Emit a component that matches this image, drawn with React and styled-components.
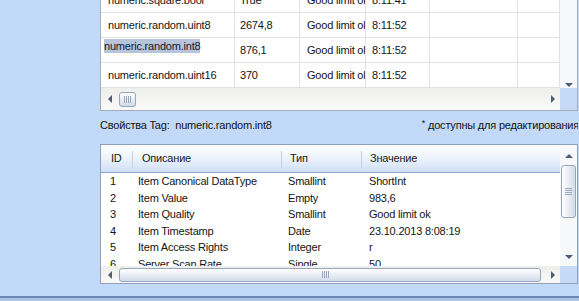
import React from 'react';
import styled, { createGlobalStyle } from 'styled-components';

const Global = createGlobalStyle`
  html, body { margin: 0; padding: 0; }
  body {
    width: 579px; height: 301px; overflow: hidden;
    background: #c2d9f8;
    font-family: "Liberation Sans", Arial, sans-serif;
    font-size: 11px; letter-spacing: -0.2px; color: #141414;
  }
`;

const Screen = styled.div`
  width: 579px; height: 301px;
  display: flex; flex-direction: column;
  background: #c2d9f8;
`;
const Workspace = styled.div`
  height: 296px; flex: none; display: flex;
`;
const Side = styled.div`
  width: 100px; flex: none;
`;
const Content = styled.div`
  width: 478px; flex: none; display: flex; flex-direction: column;
`;
const StatusEdge = styled.div`
  height: 2px; flex: none; background: #6a86b3;
`;
const StatusFill = styled.div`
  flex: 1; background: #aec4e4;
`;

/* ---------- grid panels ---------- */
const Panel = styled.div`
  box-sizing: border-box;
  height: ${p => p.$h}px;
  border: 1px solid ${p => p.$border};
  border-top: ${p => (p.$openTop ? 'none' : `1px solid ${p.$border}`)};
  background: #fff;
  display: grid;
  grid-template-columns: 459px 17px;
  grid-template-rows: ${p => p.$rows};
  overflow: hidden;
`;

const Body = styled.div`
  overflow: hidden;
  grid-column: 1;
`;

/* top grid */
const TopRows = styled.div`
  margin-top: -12px;
`;
const TopRow = styled.div`
  display: grid;
  grid-template-columns: 134px 65px 66px 64px 88px 42px;
  height: 25px;
`;
const TopCell = styled.div`
  box-sizing: border-box;
  border-right: 1px solid #e2e2e2;
  border-bottom: 1px solid #e2e2e2;
  padding-left: ${p => p.$pad}px;
  padding-top: ${p => (p.$editing ? 1 : 0)}px;
  padding-bottom: ${p => (p.$editing ? 0 : 1)}px;
  display: flex;
  align-items: ${p => (p.$editing ? 'flex-start' : 'center')};
  white-space: nowrap;
  overflow: hidden;
`;
const Selected = styled.span`
  background: #b6c4dc;
  line-height: 14px;
  color: #10182a;
`;

/* property grid */
const HeaderRow = styled.div`
  box-sizing: border-box;
  height: 28px;
  display: grid;
  grid-template-columns: 32px 149px 80px 198px;
  background: linear-gradient(#fdfeff 0%, #eef4fc 45%, #cfe0f6 100%);
  border-bottom: 1px solid #8fa8cf;
`;
const HeaderCell = styled.div`
  display: flex;
  align-items: center;
  justify-content: space-between;
  padding-left: ${p => p.$pad}px;
  padding-bottom: 1px;
  white-space: nowrap;
  color: #1a1a1a;
`;
const Divider = styled.div`
  width: 1px;
  height: 17px;
  background: #c7d1df;
  margin-top: 2px;
`;
const PropRow = styled.div`
  display: grid;
  grid-template-columns: 32px 149px 80px 198px;
  height: 16.5px;
  align-items: center;
`;
const PropCell = styled.div`
  padding-left: ${p => p.$pad}px;
  white-space: nowrap;
  overflow: hidden;
  line-height: 14px;
`;

/* ---------- scrollbars ---------- */
const VScroll = styled.div`
  grid-column: 2;
  grid-row: ${p => p.$span};
  background: #f7f8f9;
  display: flex;
  flex-direction: column;
  align-items: center;
  justify-content: ${p => (p.$only ? 'flex-end' : 'flex-start')};
  padding-top: ${p => p.$top || 0}px;
  padding-bottom: ${p => p.$bottom || 0}px;
  box-sizing: border-box;
`;
const HScroll = styled.div`
  grid-column: 1;
  display: flex;
  align-items: center;
  padding: 0 5px 0 7px;
  background: linear-gradient(#eeeeec, #f9f9f8);
`;
const Corner = styled.div`
  grid-column: 2;
  background: #c4daf7;
`;
const Spacer = styled.div`
  flex: 1;
`;
const Arrow = styled.div`
  width: 0; height: 0; flex: none;
  border-style: solid;
  ${p =>
    p.$dir === 'left'
      ? 'border-width: 4px 4px 4px 0; border-color: transparent #4e5b74 transparent transparent;'
      : p.$dir === 'right'
      ? 'border-width: 4px 0 4px 4px; border-color: transparent transparent transparent #4e5b74;'
      : p.$dir === 'up'
      ? 'border-width: 0 4px 4px 4px; border-color: transparent transparent #4e5b74 transparent;'
      : 'border-width: 4px 4px 0 4px; border-color: #4e5b74 transparent transparent transparent;'}
`;
const HThumb = styled.div`
  box-sizing: border-box;
  flex: none;
  width: ${p => p.$w}px;
  height: ${p => p.$h}px;
  margin-left: 7px;
  border: 1px solid #97a6bd;
  border-radius: 3px;
  background: linear-gradient(#ffffff, #e9eef5 50%, #d2dbe8);
  display: flex;
  align-items: center;
  padding-left: ${p => p.$grip}px;
  justify-content: ${p => (p.$grip ? 'flex-start' : 'center')};
`;
const VThumb = styled.div`
  box-sizing: border-box;
  flex: none;
  width: 15px;
  height: ${p => p.$h}px;
  margin-top: 7px;
  border: 1px solid #97a6bd;
  border-radius: 3px;
  background: linear-gradient(90deg, #ffffff, #e9eef5 50%, #d2dbe8);
  display: flex;
  align-items: center;
  justify-content: center;
`;
const GripH = styled.div`
  display: flex;
  gap: 1px;
  & > span { width: 1px; height: 7px; background: #9aa8bd; }
`;
const GripV = styled.div`
  display: flex;
  flex-direction: column;
  gap: 1px;
  & > span { width: 7px; height: 1px; background: #9aa8bd; }
`;

/* ---------- info bar ---------- */
const InfoBar = styled.div`
  box-sizing: border-box;
  height: 33px;
  flex: none;
  padding-bottom: 6px;
  display: flex;
  align-items: center;
  justify-content: space-between;
  white-space: pre;
  overflow: hidden;
`;
const Note = styled.span`
  margin-right: -1px;
`;
const Star = styled.sup`
  font-size: 9px;
  vertical-align: 3px;
  line-height: 0;
`;

const topRows = [
  ['numeric.square.bool', 'True', 'Good limit ok', '8:11:41'],
  ['numeric.random.uint8', '2674,8', 'Good limit ok', '8:11:52'],
  ['numeric.random.int8', '876,1', 'Good limit ok', '8:11:52', true],
  ['numeric.random.uint16', '370', 'Good limit ok', '8:11:52'],
];

const props = [
  ['1', 'Item Canonical DataType', 'Smallint', 'ShortInt'],
  ['2', 'Item Value', 'Empty', '983,6'],
  ['3', 'Item Quality', 'Smallint', 'Good limit ok'],
  ['4', 'Item Timestamp', 'Date', '23.10.2013 8:08:19'],
  ['5', 'Item Access Rights', 'Integer', 'r'],
  ['6', 'Server Scan Rate', 'Single', '50'],
];

const Grip = ({ v }) =>
  v ? (
    <GripV><span /><span /><span /><span /></GripV>
  ) : (
    <GripH><span /><span /><span /><span /></GripH>
  );

export default function App() {
  return (
    <>
      <Global />
      <Screen>
        <Workspace>
          <Side />
          <Content>
            <Panel $h={111} $border="#a3adba" $openTop $rows="88px 22px">
              <Body>
                <TopRows>
                  {topRows.map(([a, b, c, d, edit]) => (
                    <TopRow key={a}>
                      <TopCell $pad={edit ? 3 : 7} $editing={edit}>
                        {edit ? <Selected>{a}</Selected> : a}
                      </TopCell>
                      <TopCell $pad={5}>{b}</TopCell>
                      <TopCell $pad={7}>{c}</TopCell>
                      <TopCell $pad={6}>{d}</TopCell>
                      <TopCell />
                      <TopCell />
                    </TopRow>
                  ))}
                </TopRows>
              </Body>
              <VScroll $span="1" $only $bottom={1}>
                <Arrow $dir="down" />
              </VScroll>
              <HScroll>
                <Arrow $dir="left" />
                <HThumb $w={17} $h={15}>
                  <Grip />
                </HThumb>
                <Spacer />
                <Arrow $dir="right" />
              </HScroll>
              <Corner />
            </Panel>

            <InfoBar>
              <span>{'Свойства Tag:  numeric.random.int8'}</span>
              <Note>
                <Star>*</Star>
                {' доступны для редактирования'}
              </Note>
            </InfoBar>

            <Panel $h={140} $border="#8fa0b8" $rows="28px 93px 17px">
              <HeaderRow>
                <HeaderCell $pad={10}>ID<Divider /></HeaderCell>
                <HeaderCell $pad={9}>Описание<Divider /></HeaderCell>
                <HeaderCell $pad={8}>Тип<Divider /></HeaderCell>
                <HeaderCell $pad={8}>Значение</HeaderCell>
              </HeaderRow>
              <VScroll $span="1 / span 2" $top={9} $bottom={7}>
                <Arrow $dir="up" />
                <VThumb $h={53}>
                  <Grip v />
                </VThumb>
                <Spacer />
                <Arrow $dir="down" />
              </VScroll>
              <Body>
                {props.map(([id, desc, type, val]) => (
                  <PropRow key={id}>
                    <PropCell $pad={9}>{id}</PropCell>
                    <PropCell $pad={5}>{desc}</PropCell>
                    <PropCell $pad={6}>{type}</PropCell>
                    <PropCell $pad={7}>{val}</PropCell>
                  </PropRow>
                ))}
              </Body>
              <HScroll>
                <Arrow $dir="left" />
                <HThumb $w={422} $h={14} $grip={202}>
                  <Grip />
                </HThumb>
                <Spacer />
                <Arrow $dir="right" />
              </HScroll>
              <Corner />
            </Panel>
          </Content>
        </Workspace>
        <StatusEdge />
        <StatusFill />
      </Screen>
    </>
  );
}
